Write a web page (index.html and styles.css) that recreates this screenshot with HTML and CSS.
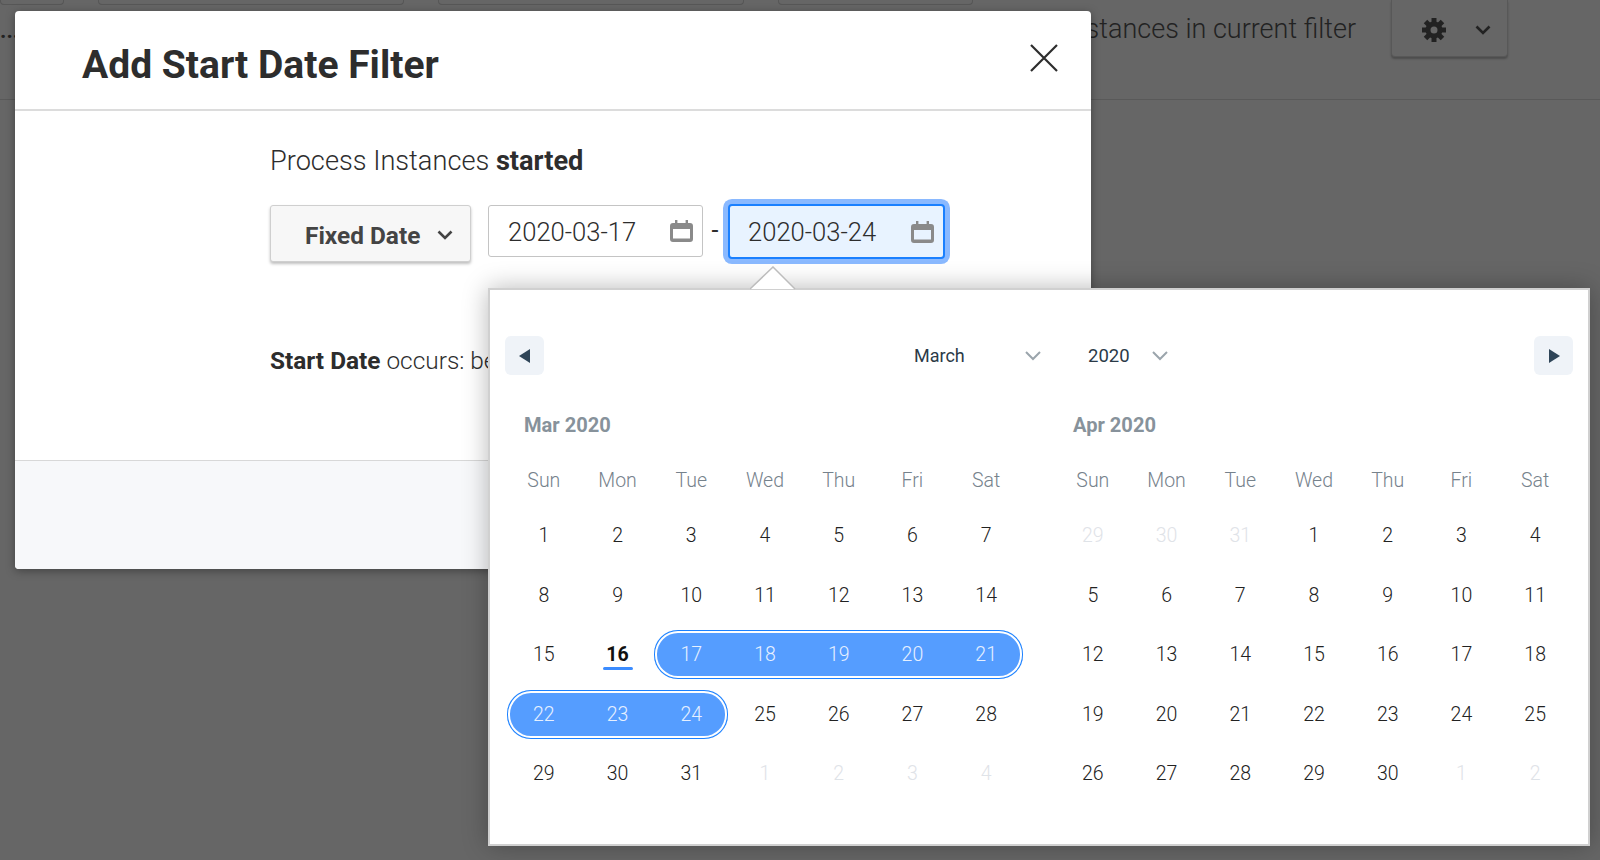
FILE: index.html
```html
<!DOCTYPE html>
<html lang="en">
<head>
  <meta charset="UTF-8" />
  <title>Add Start Date Filter</title>
  <link rel="stylesheet" href="styles.css">
</head>
<body>
  <div class="topbar">
    <span class="more">...</span>
    <div class="bar-box box-a"></div>
    <div class="bar-box box-b"></div>
    <div class="bar-box box-b"></div>
    <div class="bar-box box-c"></div>
    <span class="bar-text">Process Instances in current filter</span>
    <button class="gear-btn">
      <svg class="gear" width="24" height="24" viewBox="0 0 24 24">
        <g fill="#222">
          <rect x="9.5" y="0" width="5" height="6"/>
          <rect x="9.5" y="18" width="5" height="6"/>
          <rect x="9.5" y="0" width="5" height="6" transform="rotate(45 12 12)"/>
          <rect x="9.5" y="18" width="5" height="6" transform="rotate(45 12 12)"/>
          <rect x="9.5" y="0" width="5" height="6" transform="rotate(90 12 12)"/>
          <rect x="9.5" y="18" width="5" height="6" transform="rotate(90 12 12)"/>
          <rect x="9.5" y="0" width="5" height="6" transform="rotate(135 12 12)"/>
          <rect x="9.5" y="18" width="5" height="6" transform="rotate(135 12 12)"/>
        </g>
        <circle cx="12" cy="12" r="6" fill="none" stroke="#222" stroke-width="5"/>
      </svg>
      <svg width="16" height="10" viewBox="0 0 16 10"><path d="M1.5 1.5 8 8l6.5-6.5" fill="none" stroke="#222" stroke-width="2.6"/></svg>
    </button>
  </div>

  <div class="modal">
    <div class="modal-header">
      <h1>Add Start Date Filter</h1>
      <svg class="close" width="28" height="28" viewBox="0 0 28 28"><path d="M1 1l26 26M27 1 1 27" stroke="#2d2d2d" stroke-width="2.2" fill="none"/></svg>
    </div>
    <div class="modal-body">
      <p class="lead">Process Instances <b>started</b></p>
      <div class="date-row">
        <button class="type-select">Fixed Date
          <svg width="16" height="10" viewBox="0 0 16 10"><path d="M1.5 1.5 8 8l6.5-6.5" fill="none" stroke="#444" stroke-width="2.6"/></svg>
        </button>
        <div class="date-input">
          <span>2020-03-17</span>
          <svg class="cal" width="23" height="22" viewBox="0 0 23 22"><path d="M5 0h2.4v3h8.2V0H18v3h2a3 3 0 0 1 3 3v13a3 3 0 0 1-3 3H3a3 3 0 0 1-3-3V6a3 3 0 0 1 3-3h2zM3 9v9.500h17V9z" fill="#8a8a8a" fill-rule="evenodd"/></svg>
        </div>
        <span class="dash">-</span>
        <div class="date-input focused">
          <span>2020-03-24</span>
          <svg class="cal" width="23" height="22" viewBox="0 0 23 22"><path d="M5 0h2.4v3h8.2V0H18v3h2a3 3 0 0 1 3 3v13a3 3 0 0 1-3 3H3a3 3 0 0 1-3-3V6a3 3 0 0 1 3-3h2zM3 9v9.500h17V9z" fill="#8a8a8a" fill-rule="evenodd"/></svg>
        </div>
      </div>
      <p class="summary"><b>Start Date</b> occurs: between</p>
    </div>
    <div class="modal-footer"></div>
  </div>

  <div class="picker">
    <svg class="picker-arrow" width="46" height="24" viewBox="0 0 46 24"><path d="M0 23 23 1l22 22" fill="#fff" stroke="#bdbdbd" stroke-width="1.5"/></svg>
    <div class="picker-nav">
      <button class="nav-btn"><svg width="12" height="14" viewBox="0 0 12 14"><path d="M11 0v14L0 7z" fill="#2f4558"/></svg></button>
      <div class="nav-selects">
        <div class="nav-select month-select">March
          <svg width="16" height="10" viewBox="0 0 16 10"><path d="M1 1l7 7 7-7" fill="none" stroke="#9ba5ac" stroke-width="2"/></svg>
        </div>
        <div class="nav-select year-select">2020
          <svg width="16" height="10" viewBox="0 0 16 10"><path d="M1 1l7 7 7-7" fill="none" stroke="#9ba5ac" stroke-width="2"/></svg>
        </div>
      </div>
      <button class="nav-btn"><svg width="12" height="14" viewBox="0 0 12 14"><path d="M1 0v14l11-7z" fill="#2f4558"/></svg></button>
    </div>

    <div class="months">
      <div class="month">
        <div class="month-title">Mar 2020</div>
        <div class="weekdays">
          <span>Sun</span><span>Mon</span><span>Tue</span><span>Wed</span><span>Thu</span><span>Fri</span><span>Sat</span>
        </div>
        <div class="days">
          <span>1</span><span>2</span><span>3</span><span>4</span><span>5</span><span>6</span><span>7</span>
          <span>8</span><span>9</span><span>10</span><span>11</span><span>12</span><span>13</span><span>14</span>
          <span>15</span><span class="today">16</span>
          <div class="range span-5"><span>17</span><span>18</span><span>19</span><span>20</span><span>21</span></div>
          <div class="range span-3"><span>22</span><span>23</span><span>24</span></div>
          <span>25</span><span>26</span><span>27</span><span>28</span>
          <span>29</span><span>30</span><span>31</span><span class="off">1</span><span class="off">2</span><span class="off">3</span><span class="off">4</span>
        </div>
      </div>
      <div class="month">
        <div class="month-title">Apr 2020</div>
        <div class="weekdays">
          <span>Sun</span><span>Mon</span><span>Tue</span><span>Wed</span><span>Thu</span><span>Fri</span><span>Sat</span>
        </div>
        <div class="days">
          <span class="off">29</span><span class="off">30</span><span class="off">31</span><span>1</span><span>2</span><span>3</span><span>4</span>
          <span>5</span><span>6</span><span>7</span><span>8</span><span>9</span><span>10</span><span>11</span>
          <span>12</span><span>13</span><span>14</span><span>15</span><span>16</span><span>17</span><span>18</span>
          <span>19</span><span>20</span><span>21</span><span>22</span><span>23</span><span>24</span><span>25</span>
          <span>26</span><span>27</span><span>28</span><span>29</span><span>30</span><span class="off">1</span><span class="off">2</span>
        </div>
      </div>
    </div>
  </div>
</body>
</html>
```

FILE: styles.css
```css
html, body { margin: 0; height: 100%; overflow: hidden; }
body { background: #666; font-family: Roboto, "Noto Sans", sans-serif; color: #2d2d2d; }
button { font-family: inherit; }
p, h1 { margin: 0; }

/* page behind the dialog */
.topbar { display: flex; align-items: flex-start; height: 100px; border-bottom: 1px solid #595959; box-sizing: border-box; }
.more { position: absolute; left: 0; top: 18px; font-size: 22px; font-weight: 700; color: #222; }
.bar-box { flex: none; height: 5px; border: 1px solid #575757; border-top: 0; border-radius: 0 0 4px 4px; box-sizing: border-box; margin-right: 34px; }
.box-a { width: 64px; }
.box-b { width: 306px; }
.box-c { width: 195px; }
.bar-text { flex: 1; min-width: 0; display: flex; justify-content: flex-end; margin-top: 14px; font-size: 27px; line-height: 30px; font-weight: 300; color: #222; white-space: nowrap; }
.gear-btn { flex: none; display: flex; align-items: center; justify-content: space-between; width: 117px; height: 57px; margin: 0 92px 0 35px; padding: 4px 16px 0 30px; background: #666; border: 1px solid #585858; border-top: 0; border-radius: 0 0 4px 4px; box-shadow: 0 2px 2px rgba(0,0,0,0.25); }

/* dialog */
.modal { position: absolute; left: 15px; top: 11px; width: 1076px; height: 558px; display: flex; flex-direction: column; background: #fff; border-radius: 4px; box-shadow: 0 2px 10px rgba(0,0,0,0.35); }
.modal-header { display: flex; align-items: center; justify-content: space-between; height: 100px; flex: none; box-sizing: border-box; padding: 0 33px 8px 67px; border-bottom: 2px solid #dcdcdc; }
.modal-header h1 { font-size: 39px; font-weight: 700; line-height: 44px; margin-top: 18px; }
.close { margin-top: 4px; }
.modal-body { flex: 1; padding: 35px 0 0 255px; }
.lead { font-size: 27.2px; line-height: 30px; font-weight: 300; }
.lead b { font-weight: 700; }
.date-row { display: flex; align-items: flex-start; margin-top: 29px; }
.type-select { display: flex; align-items: center; justify-content: space-between; width: 201px; height: 57px; box-sizing: border-box; margin-right: 17px; padding: 3px 17px 0 34px; background: #f7f7f7; border: 1px solid #cfcfcf; border-radius: 3px; box-shadow: 0 2px 3px rgba(0,0,0,0.25); font-size: 24.4px; font-weight: 700; color: #444; }
.date-input { display: flex; align-items: center; justify-content: space-between; width: 215px; height: 52px; box-sizing: border-box; padding: 0 9px 0 19px; border: 1px solid #c4c4c4; border-radius: 3px; background: #fff; font-size: 25.6px; line-height: 52px; font-weight: 300; }
.date-input span { padding-top: 1px; }
.dash { width: 24px; text-align: center; font-size: 25px; line-height: 52px; font-weight: 400; }
.date-input.focused { width: 217px; height: 55px; margin-top: -1px; margin-left: 1px; padding: 0 9px 0 18px; background: #e8f3ff; border: 2px solid #1a80ff; border-radius: 4px; box-shadow: 0 0 0 5px #8ab9ff; }
.summary { margin-top: 84px; font-size: 24.4px; line-height: 30px; font-weight: 300; white-space: nowrap; }
.summary b { font-weight: 700; }
.modal-footer { height: 108px; flex: none; background: #f7f8fa; border-top: 1px solid #d8d8d8; border-radius: 0 0 4px 4px; }

/* date picker popup */
.picker { position: absolute; left: 488px; top: 288px; width: 1102px; height: 558px; box-sizing: border-box; padding: 46px 15px 0; background: #fff; border: 2px solid #d0d0d0; box-shadow: 0 0 24px rgba(0,0,0,0.28); }
.picker-arrow { position: absolute; left: 260px; top: -24px; }
.picker-nav { display: flex; align-items: center; justify-content: space-between; height: 39px; }
.nav-btn { display: flex; align-items: center; justify-content: center; width: 39px; height: 39px; padding: 0; background: #eff3f8; border: 0; border-radius: 6px; }
.nav-selects { display: flex; gap: 47px; padding-left: 4px; }
.nav-select { display: flex; align-items: center; justify-content: space-between; font-size: 18px; font-weight: 400; color: #2b3a47; }
.month-select { width: 127px; }
.year-select { width: 80px; font-size: 18.5px; }
.months { display: flex; gap: 33px; margin: 35px 0 0 2px; }
.month { width: 516px; }
.month-title { height: 30px; line-height: 30px; padding-left: 17px; margin-bottom: 21px; font-size: 20.1px; font-weight: 700; color: #87929b; }
.weekdays, .days { display: grid; grid-template-columns: repeat(7, 1fr); text-align: center; }
.weekdays { height: 38px; line-height: 40px; margin-bottom: 12px; font-size: 19.5px; font-weight: 300; color: #76828c; }
.days { grid-auto-rows: 49px; row-gap: 10.6px; font-size: 19.5px; font-weight: 300; line-height: 50px; color: #222; }
.days .off { color: #dfe3e8; }
.today { position: relative; font-weight: 700; color: #111; }
.today::after { content: ""; position: absolute; left: 50%; top: 37px; width: 30px; height: 3px; margin-left: -15px; background: #3b8cff; border-radius: 2px; }
.range { display: grid; background: #559dff; color: #e6f0ff; border-radius: 24px; box-shadow: inset 0 0 0 1px #1a80ff, inset 0 0 0 3px #fff; }
.span-5 { grid-column: span 5; grid-template-columns: repeat(5, 1fr); }
.span-3 { grid-column: span 3; grid-template-columns: repeat(3, 1fr); }
```
